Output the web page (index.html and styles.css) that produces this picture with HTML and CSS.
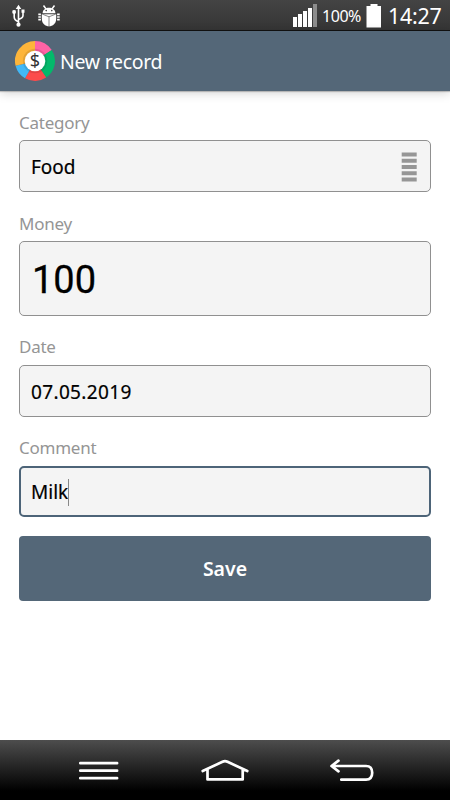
FILE: index.html
```html
<!DOCTYPE html>
<html lang="en">
<head>
<meta charset="utf-8">
<title>New record</title>
<link rel="stylesheet" href="styles.css">
</head>
<body>
<div class="screen">
  <div class="status">
    <svg class="usb" width="14" height="24" viewBox="0 0 14 24" fill="none" stroke="#fff" stroke-width="1.6">
      <path d="M6.5 20V4M6.5 17.8Q2.2 16 2.2 13V9M6.5 15.5Q11 14 11 11.5V8"/>
      <path d="M6.5 .8L9.3 5H3.7zM.6 6.3h3v3.2h-3zM9.5 5.5h3v3.2h-3z" fill="#fff" stroke="none"/>
      <circle cx="2.1" cy="8" r="1.7" fill="#fff" stroke="none"/>
      <circle cx="6.5" cy="20.7" r="2.1" fill="#fff" stroke="none"/>
    </svg>
    <svg class="bug" width="22" height="23" viewBox="0 0 22 23">
      <path d="M5.5 .5l2.4 3.3M16.5 .5l-2.4 3.3" stroke="#fff" stroke-width="1.5"/>
      <path d="M4.6 8.2C4.6 .8 17.4 .8 17.4 8.2z" fill="#fff"/>
      <circle cx="8.2" cy="5.6" r=".8" fill="#3b3b3b"/><circle cx="13.8" cy="5.6" r=".8" fill="#3b3b3b"/>
      <path d="M3.8 9.2h14.4v4.5c0 4.8-3.5 7.6-7.2 7.6s-7.2-2.8-7.2-7.6z" fill="#fff"/>
      <path d="M11 11.5v10M4.5 9.2L11 11.8L17.5 9.2" stroke="#777" stroke-width=".9" fill="none"/>
      <path d="M.3 9.4h2.6M.3 12h2.6M.3 14.6h2.6M19.1 9.4h2.6M19.1 12h2.6M19.1 14.6h2.6" stroke="#fff" stroke-width="1.7"/>
    </svg>
    <svg class="signal" width="25" height="24" viewBox="0 0 25 24" fill="#fff">
      <path d="M0 14h4v10H0zM5 11h4v13H5zM10 8h4v16h-4zM15 5h4v19h-4z"/>
      <path d="M20 1h4v23h-4z" fill="#8c8c8c"/>
    </svg>
    <span class="percent">100%</span>
    <svg class="battery" width="16" height="24" viewBox="0 0 16 24"><path d="M4.5 0h7v2H15v21.5H.5V2h4z" fill="#fff"/></svg>
    <span class="clock">14:27</span>
  </div>
  <div class="header">
    <svg class="logo" width="42" height="42" viewBox="-21 -21 42 42">
      <g fill="none" stroke-width="11">
        <path d="M0-14.5A14.5 14.5 0 0 1 12.16-7.9" stroke="#ff63a5"/>
        <path d="M12.16-7.9A14.5 14.5 0 0 1 8.1 12.02" stroke="#04b96b"/>
        <path d="M8.1 12.02A14.5 14.5 0 0 1-7.25 12.56" stroke="#fc4b4b"/>
        <path d="M-7.25 12.56A14.5 14.5 0 0 1-14.07 3.5" stroke="#42b8f7"/>
        <path d="M-14.07 3.5A14.5 14.5 0 0 1 0-14.5" stroke="#fdb53a"/>
      </g>
      <circle r="12.2" fill="#000" opacity=".1"/>
      <circle r="10.3" fill="#fff"/>
      <text class="dollar" y="6" text-anchor="middle">$</text>
    </svg>
    <h1 class="title">New record</h1>
  </div>
  <div class="form">
    <div class="label">Category</div>
    <div class="field">
      <span>Food</span>
      <svg class="grip" width="16" height="30" viewBox="0 0 16 30"><path d="M.7 .6h15v4h-15zm0 6.2h15v4h-15zm0 6.2h15v4h-15zm0 6.2h15v4h-15zm0 6.2h15v4h-15z" fill="#969696"/></svg>
    </div>
    <div class="label">Money</div>
    <div class="field money"><span>100</span></div>
    <div class="label low">Date</div>
    <div class="field date"><span>07.05.2019</span></div>
    <div class="label low">Comment</div>
    <div class="field focused"><span>Milk</span><i class="caret"></i></div>
    <div class="save">Save</div>
  </div>
  <div class="nav">
    <svg width="450" height="60" viewBox="0 0 450 60" fill="none" stroke="#fff" stroke-width="2.7" stroke-linecap="round" stroke-linejoin="round">
      <path d="M80.3 23.2h36.8M80.3 30.7h36.8M80.3 38.2h36.8"/>
      <path d="M202.7 31L222.5 21.8Q225 20.6 227.5 21.8L247.3 31M207.5 30V39.4H242.7V30"/>
      <path d="M338.5 20.7L331.5 26L338.5 31.3M332 26H366Q372.2 26 372.2 32.8T366 39.7H341.3"/>
    </svg>
  </div>
</div>
</body>
</html>
```
FILE: styles.css
```css
* { box-sizing: border-box; }
body { margin: 0; font-family: "Noto Sans", sans-serif; background: #fff; }
svg { display: block; flex: none; }
.screen { width: 450px; height: 800px; display: flex; flex-direction: column; overflow: hidden; }
.status {
  height: 31px; flex: none; display: flex; align-items: flex-start;
  background: linear-gradient(#444, #353535); border-bottom: 1px solid #111; color: #fff;
}
.usb { margin: 4px 0 0 12px; }
.bug { margin: 5px 0 0 12px; }
.signal { margin: 3px 0 0 233px; }
.percent { width: 39px; margin-left: 4px; font-size: 16px; line-height: 32px; letter-spacing: -0.45px; white-space: nowrap; }
.battery { margin: 4px 0 0 5px; }
.clock { margin-left: 6px; font-size: 21.5px; line-height: 32px; letter-spacing: -0.3px; }
.header {
  height: 60px; flex: none; display: flex; align-items: center; padding-left: 14px;
  background: #546778; color: #fff; box-shadow: 0 1px 1px rgba(0,0,0,.2), 0 2px 10px rgba(0,0,0,.18);
}
.dollar { font-size: 18px; fill: #333; }
.title { margin: 1px 0 0 4px; font-size: 19.5px; font-weight: 400; line-height: 31px; letter-spacing: -0.3px; }
.form { flex: 1; padding: 16px 19px 0; }
.label { height: 33px; font-size: 17px; line-height: 31px; letter-spacing: -0.25px; color: #959595; }
.low { line-height: 30px; }
.field {
  display: flex; align-items: center; justify-content: space-between; height: 52px; margin-bottom: 16px;
  padding: 1px 13px 0 11px; border: 1px solid #909090; border-radius: 5px;
  background: #f4f4f4; color: #000; font-size: 19px; -webkit-text-stroke: 0.2px #000;
}
.money { height: 75px; padding-left: 12px; font-family: Roboto, sans-serif; font-size: 38px; -webkit-text-stroke: 0.3px #000; }
.money span { margin-top: 1px; }
.date { letter-spacing: 0.35px; }
.focused { height: 51px; justify-content: flex-start; border: 2px solid #4d6478; padding-left: 10px; margin-bottom: 19px; }
.caret { width: 1px; height: 27px; background: #888; }
.save {
  height: 65px; line-height: 66px; border-radius: 4px; background: #546778;
  color: #fff; font-size: 19.5px; font-weight: 600; text-align: center;
}
.nav { height: 60px; flex: none; background: linear-gradient(#4d4d4d, #000 85%); }
```
